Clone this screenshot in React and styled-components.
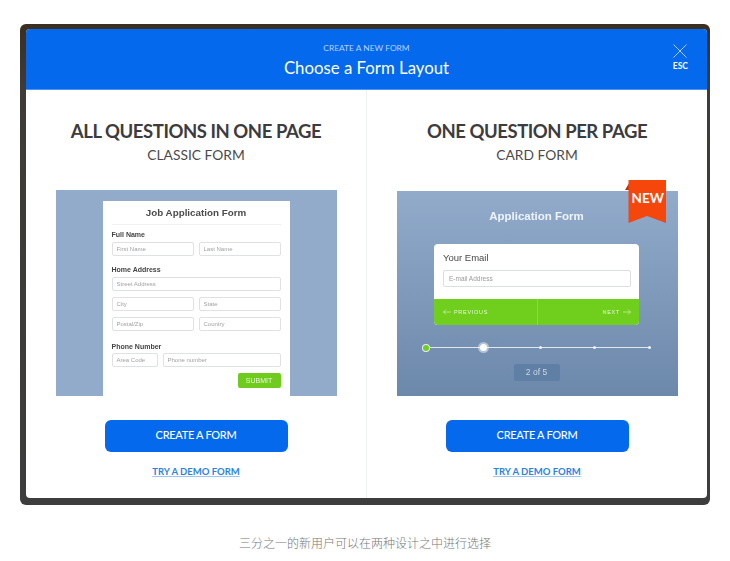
import React from 'react';
import styled, { createGlobalStyle } from 'styled-components';

const GlobalStyle = createGlobalStyle`
  html, body {
    margin: 0;
    background: #fff;
  }
  * {
    box-sizing: border-box;
  }
`;

const uiFont = `Lato, 'Noto Sans', sans-serif`;
const mockFont = `'Liberation Sans', Arial, sans-serif`;

const Page = styled.div`
  width: 730px;
  height: 561px;
  padding: 24px 20px 0;
  overflow: hidden;
  font-family: ${uiFont};
`;

const Frame = styled.div`
  width: 690px;
  height: 481px;
  padding: 5px 3px 7px 6px;
  border-radius: 6px;
  background: linear-gradient(180deg, #3a2f20 0%, #3f3c38 14%, #3d3d3d 100%);
`;

const Modal = styled.div`
  height: 100%;
  border-radius: 4px;
  background: #fff;
  overflow: hidden;
  display: flex;
  flex-direction: column;
`;

const Header = styled.header`
  position: relative;
  height: 61px;
  flex: none;
  padding-top: 13px;
  background: #0569ee;
  border-bottom: 1px solid #4b94f3;
  color: #fff;
  text-align: center;
`;

const Eyebrow = styled.div`
  font-size: 8.4px;
  line-height: 12px;
  color: #b9d3fa;
`;

const HeaderTitle = styled.h1`
  margin: 3px 0 0;
  font-size: 16.8px;
  line-height: 22px;
  font-weight: 400;
`;

const Close = styled.div`
  position: absolute;
  top: 15px;
  right: 19px;
  display: flex;
  flex-direction: column;
  align-items: center;
  gap: 3px;
  font-size: 8.5px;
  line-height: 10px;
  font-weight: 700;
`;

const Columns = styled.div`
  flex: 1;
  display: grid;
  grid-template-columns: 341px 340px;
`;

const Column = styled.section`
  display: flex;
  flex-direction: column;
  align-items: center;
  padding-top: 28px;
  border-right: ${(p) => (p.$divided ? '1px solid #f0f1f2' : 'none')};
`;

const Title = styled.h2`
  margin: 0;
  font-size: 18.5px;
  line-height: 26px;
  font-weight: 700;
  letter-spacing: -0.45px;
  color: #3c3c3e;
  white-space: nowrap;
`;

const Subtitle = styled.h3`
  margin: 1px 0 0;
  font-size: 13.8px;
  line-height: 20px;
  font-weight: 400;
  color: #4a4a4c;
`;

const Shot = styled.div`
  position: relative;
  width: 281px;
  height: 206px;
  margin-top: 25px;
  font-family: ${mockFont};
`;

const ClassicBack = styled.div`
  height: 100%;
  display: flex;
  justify-content: center;
  padding-top: 11px;
  background: #92abca;
  filter: blur(0.45px);
`;

const Sheet = styled.div`
  width: 187px;
  height: 195px;
  padding: 6px 9px 0;
  background: #fff;
`;

const SheetTitle = styled.div`
  padding-bottom: 5px;
  border-bottom: 1px solid #f0f0f0;
  font-size: 9.8px;
  line-height: 12px;
  font-weight: 700;
  text-align: center;
  color: #4b4b4b;
`;

const Label = styled.div`
  margin-top: ${(p) => p.$top}px;
  font-size: 7px;
  line-height: 8px;
  font-weight: 700;
  color: #444;
`;

const Row = styled.div`
  display: grid;
  grid-template-columns: ${(p) => p.$cols || '82px 82px'};
  gap: 5px;
  margin-top: ${(p) => p.$top}px;
`;

const Field = styled.div`
  height: 14px;
  padding-left: 4px;
  border: 1px solid #dfe1e3;
  border-radius: 2px;
  font-size: 6px;
  line-height: 12px;
  color: #a2a2a2;
  white-space: nowrap;
`;

const SubmitRow = styled.div`
  display: flex;
  justify-content: flex-end;
  margin-top: 6px;
`;

const Submit = styled.div`
  width: 43px;
  height: 15px;
  border-radius: 2px;
  background: #6fcb1d;
  color: #e8f8d8;
  font-size: 7px;
  line-height: 15px;
  text-align: center;
`;

const CardBack = styled.div`
  height: 205px;
  margin-top: 1px;
  display: flex;
  flex-direction: column;
  align-items: center;
  padding: 18px 1px 0 0;
  background: linear-gradient(180deg, #92abcb 0%, #6c88aa 100%);
  filter: blur(0.4px);
`;

const CardHeading = styled.div`
  font-size: 11.5px;
  line-height: 14px;
  font-weight: 700;
  color: #eef3f9;
`;

const Card = styled.div`
  width: 205px;
  height: 81px;
  margin-top: 21px;
  border-radius: 4px;
  overflow: hidden;
  background: #fff;
  display: flex;
  flex-direction: column;
`;

const CardBody = styled.div`
  flex: 1;
  padding: 8px 8px 0 9px;
`;

const CardLabel = styled.div`
  font-size: 9.5px;
  line-height: 11px;
  color: #4a4a4a;
`;

const CardInput = styled.div`
  height: 17px;
  margin-top: 7px;
  padding-left: 5px;
  border: 1px solid #dcdee2;
  border-radius: 2px;
  font-size: 6.5px;
  line-height: 15px;
  color: #9a9a9a;
`;

const CardNav = styled.div`
  height: 26px;
  flex: none;
  display: grid;
  grid-template-columns: 1fr 1fr;
  background: #70ce1c;
`;

const NavItem = styled.div`
  display: flex;
  align-items: center;
  justify-content: ${(p) => (p.$end ? 'flex-end' : 'flex-start')};
  gap: 3px;
  padding: 0 8px 0 9px;
  border-left: ${(p) => (p.$end ? '1px solid #8bd948' : 'none')};
  color: #e6f7d6;
  font-size: 5.5px;
  letter-spacing: 0.7px;
`;

const Track = styled.div`
  width: 228px;
  height: 9px;
  margin-top: 18px;
  display: flex;
  align-items: center;
  justify-content: space-between;
  background: linear-gradient(#dfe7f0, #dfe7f0) center / 100% 1px no-repeat;
`;

const Stop = styled.span`
  width: ${(p) => p.$size}px;
  height: ${(p) => p.$size}px;
  border-radius: 50%;
  background: ${(p) => p.$color || '#eef2f7'};
  box-shadow: ${(p) => p.$ring || 'none'};
`;

const Pager = styled.div`
  width: 46px;
  height: 17px;
  margin-top: 12px;
  border-radius: 2px;
  background: #5f7fa5;
  color: #ccd8e6;
  font-size: 8.5px;
  line-height: 17px;
  text-align: center;
`;

const Ribbon = styled.div`
  position: absolute;
  top: -10px;
  right: 12px;
  width: 41px;
  height: 43px;
`;

const RibbonText = styled.span`
  position: absolute;
  top: 10px;
  left: 7px;
  font-family: ${uiFont};
  font-size: 13.5px;
  line-height: 16px;
  font-weight: 700;
  color: #fff;
`;

const CreateButton = styled.button`
  width: 183px;
  height: 32px;
  margin-top: 24px;
  padding: 0 0 3px;
  border: 0;
  border-radius: 6px;
  background: #0569ee;
  color: #fff;
  font-family: ${uiFont};
  font-size: 11px;
  font-weight: 500;
  letter-spacing: -0.3px;
`;

const DemoLink = styled.a`
  margin-top: 13px;
  font-size: 9.5px;
  line-height: 14px;
  font-weight: 700;
  color: #2a83e0;
  text-decoration: underline;
  text-decoration-color: #9cc5ef;
`;

const Caption = styled.p`
  margin: 29px 0 0;
  font-family: 'Noto Sans CJK SC', sans-serif;
  font-size: 12px;
  line-height: 17px;
  font-weight: 300;
  text-align: center;
  color: #777;
`;

const CloseIcon = () => (
  <svg width="14" height="14" viewBox="0 0 14 14" fill="none" stroke="#e4eefd" strokeWidth="0.8">
    <path d="M0.5 0.5 13.5 13.5M13.5 0.5 0.5 13.5" />
  </svg>
);

const Arrow = ({ flip }) => (
  <svg width="8" height="6" viewBox="0 0 8 6" fill="none" stroke="#e6f7d6" strokeWidth="0.6"
    style={flip ? { transform: 'scaleX(-1)' } : undefined}>
    <path d="M8 3H0.5M3 0.5 0.5 3 3 5.5" />
  </svg>
);

const RibbonShape = () => (
  <svg width="41" height="43" viewBox="0 0 41 43">
    <path d="M0 10 6 0V10Z" fill="#b5330a" />
    <path d="M3.5 0H41V43L22 36 3.5 43Z" fill="#f5470c" />
  </svg>
);

const ClassicShot = () => (
  <Shot>
    <ClassicBack>
      <Sheet>
        <SheetTitle>Job Application Form</SheetTitle>
        <Label $top={6}>Full Name</Label>
        <Row $top={3}>
          <Field>First Name</Field>
          <Field>Last Name</Field>
        </Row>
        <Label $top={10}>Home Address</Label>
        <Row $top={3} $cols="169px">
          <Field>Street Address</Field>
        </Row>
        <Row $top={6}>
          <Field>City</Field>
          <Field>State</Field>
        </Row>
        <Row $top={6}>
          <Field>Postal/Zip</Field>
          <Field>Country</Field>
        </Row>
        <Label $top={12}>Phone Number</Label>
        <Row $top={2} $cols="46px 118px">
          <Field>Area Code</Field>
          <Field>Phone number</Field>
        </Row>
        <SubmitRow>
          <Submit>SUBMIT</Submit>
        </SubmitRow>
      </Sheet>
    </ClassicBack>
  </Shot>
);

const CardShot = () => (
  <Shot>
    <CardBack>
      <CardHeading>Application Form</CardHeading>
      <Card>
        <CardBody>
          <CardLabel>Your Email</CardLabel>
          <CardInput>E-mail Address</CardInput>
        </CardBody>
        <CardNav>
          <NavItem><Arrow />PREVIOUS</NavItem>
          <NavItem $end>NEXT<Arrow flip /></NavItem>
        </CardNav>
      </Card>
      <Track>
        <Stop $size={6} $color="#70ce1c" $ring="0 0 0 1px #e6edf4" />
        <Stop $size={7} $color="#fff" $ring="0 0 0 2px rgba(255,255,255,.45)" />
        <Stop $size={3} />
        <Stop $size={3} />
        <Stop $size={3} />
      </Track>
      <Pager>2 of 5</Pager>
    </CardBack>
    <Ribbon>
      <RibbonShape />
      <RibbonText>NEW</RibbonText>
    </Ribbon>
  </Shot>
);

export default function App() {
  return (
    <Page>
      <GlobalStyle />
      <Frame>
        <Modal>
          <Header>
            <Eyebrow>CREATE A NEW FORM</Eyebrow>
            <HeaderTitle>Choose a Form Layout</HeaderTitle>
            <Close>
              <CloseIcon />
              ESC
            </Close>
          </Header>
          <Columns>
            <Column $divided>
              <Title>ALL QUESTIONS IN ONE PAGE</Title>
              <Subtitle>CLASSIC FORM</Subtitle>
              <ClassicShot />
              <CreateButton>CREATE A FORM</CreateButton>
              <DemoLink>TRY A DEMO FORM</DemoLink>
            </Column>
            <Column>
              <Title>ONE QUESTION PER PAGE</Title>
              <Subtitle>CARD FORM</Subtitle>
              <CardShot />
              <CreateButton>CREATE A FORM</CreateButton>
              <DemoLink>TRY A DEMO FORM</DemoLink>
            </Column>
          </Columns>
        </Modal>
      </Frame>
      <Caption>三分之一的新用户可以在两种设计之中进行选择</Caption>
    </Page>
  );
}
